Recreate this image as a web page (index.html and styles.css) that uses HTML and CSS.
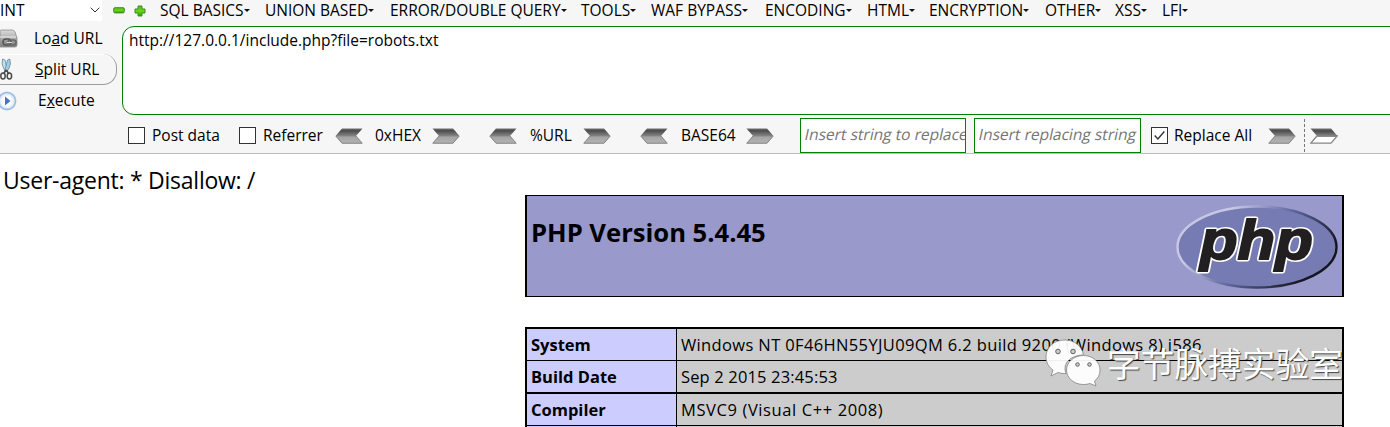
FILE: index.html
```html
<!DOCTYPE html>
<html lang="en">
<head>
<meta charset="utf-8">
<title>phpinfo()</title>
<link rel="stylesheet" href="styles.css">
</head>
<body>
<svg class="defs" width="0" height="0" aria-hidden="true">
  <defs>
    <linearGradient id="steel" x1="0" y1="0" x2="0" y2="1">
      <stop offset="0" stop-color="#707070"/><stop offset=".15" stop-color="#4c4c4c"/><stop offset=".5" stop-color="#858585"/><stop offset=".56" stop-color="#a4a4a4"/><stop offset="1" stop-color="#b4b4b4"/>
    </linearGradient>
    <linearGradient id="steelTop" x1="0" y1="0" x2="0" y2="1">
      <stop offset="0" stop-color="#707070"/><stop offset=".3" stop-color="#4c4c4c"/><stop offset="1" stop-color="#929292"/>
    </linearGradient>
    <linearGradient id="green" x1="0" y1="0" x2="0" y2="1">
      <stop offset="0" stop-color="#58b81c"/><stop offset=".5" stop-color="#62dc0c"/><stop offset="1" stop-color="#3b9a08"/>
    </linearGradient>
    <linearGradient id="disk" x1="0" y1="0" x2="0" y2="1">
      <stop offset="0" stop-color="#dcdcdc"/><stop offset="1" stop-color="#7c7c7c"/>
    </linearGradient>
    <radialGradient id="play">
      <stop offset=".45" stop-color="#fff"/><stop offset=".72" stop-color="#e1ecf8"/><stop offset=".88" stop-color="#93b6e2"/><stop offset="1" stop-color="#c4d6ec"/>
    </radialGradient>
    <linearGradient id="rim" x1="0" y1="0" x2="1" y2=".45">
      <stop offset="0" stop-color="#c6c8e4"/><stop offset=".3" stop-color="#c6c8e4"/><stop offset=".62" stop-color="#6068a0"/><stop offset="1" stop-color="#15151f"/>
    </linearGradient>
    <symbol id="next" viewBox="0 0 28 16">
      <path d="M.5 .5H21L27.5 8L21 15.5H.5L7 8Z" fill="url(#steel)"/>
      <path d="M.8 15.2L7 8M27.2 8L21 15.2H.8" fill="none" stroke="#858585"/>
    </symbol>
    <symbol id="next-open" viewBox="0 0 28 16">
      <path d="M.8 15.2L7 8H27.2L21 15.2Z" fill="#fff" stroke="#858585" stroke-width="1.3"/>
      <path d="M.5 .5H21L27.5 8L26 9H8L7 8Z" fill="url(#steelTop)"/>
    </symbol>
  </defs>
</svg>

<header class="hackbar">
  <div class="menu-row">
    <div class="select"><span>INT</span><svg width="10" height="6" viewBox="0 0 10 6"><path d="M.7 .7L5 5L9.3 .7" fill="none" stroke="#333"/></svg></div>
    <svg class="minus" width="12" height="7" viewBox="0 0 12 7"><rect x=".7" y=".7" width="10.6" height="5.2" rx="1.3" fill="url(#green)" stroke="#44892a"/></svg>
    <svg class="plus" width="12" height="12" viewBox="0 0 12 12"><path d="M4 1H8V4H11V8H8V11H4V8H1V4H4Z" fill="url(#green)" stroke="#44892a" stroke-linejoin="round"/></svg>
    <nav class="menu">
      <a>SQL BASICS</a><a>UNION BASED</a><a>ERROR/DOUBLE QUERY</a><a>TOOLS</a><a>WAF BYPASS</a><a>ENCODING</a><a>HTML</a><a>ENCRYPTION</a><a>OTHER</a><a>XSS</a><a>LFI</a>
    </nav>
  </div>

  <div class="main-row">
    <div class="actions">
      <div class="action">
        <svg width="18" height="20" viewBox="0 0 18 20"><path d="M0 2Q0 1 2 1H12Q14 1 15 3L17 9V16Q17 18 15 18H0Z" fill="url(#disk)" stroke="#8a8a8a" stroke-width=".8"/><path d="M0 8H16" stroke="#eee"/><rect x="3" y="10" width="8" height="6" rx="3" fill="none" stroke="#555" stroke-width="1.6"/><rect x="8" y="11" width="8" height="5" rx="2.5" fill="none" stroke="#686868" stroke-width="1.6"/><path d="M7 13.5H12" stroke="#ddd"/></svg>
        <span>Lo<u>a</u>d URL</span>
      </div>
      <div class="action raised">
        <svg width="18" height="24" viewBox="0 0 18 24"><path d="M2.5 2Q1 7 4 12L6 15L7.3 13L5 3Z" fill="#c2e1ee" stroke="#65899a" stroke-width=".8"/><path d="M9.8 2Q11.5 7 8.7 12L6 15L5 13L7.500 3Z" fill="#a4cee0" stroke="#65899a" stroke-width=".8"/><path d="M6 13L3.5 17M6.3 13L9 17" stroke="#444" stroke-width="1.6"/><ellipse cx="3" cy="19" rx="2.200" ry="3" fill="none" stroke="#4a4a4a" stroke-width="1.5"/><ellipse cx="9.400" cy="19" rx="2.200" ry="3" fill="none" stroke="#4a4a4a" stroke-width="1.5"/></svg>
        <span><u>S</u>plit URL</span>
      </div>
      <div class="action">
        <svg width="18" height="20" viewBox="0 0 18 20"><circle cx="7" cy="10" r="9.600" fill="url(#play)"/><path d="M5 5.500L10.500 10L5 14.500Z" fill="#3c78c4"/></svg>
        <span class="execute">E<u>x</u>ecute</span>
      </div>
    </div>
    <div class="url-box">http://127.0.0.1/include.php?file=robots.txt</div>
  </div>

  <div class="options">
    <i class="check"></i><span class="post">Post data</span>
    <i class="check"></i><span class="referrer">Referrer</span>
    <svg class="arrow back"><use href="#next"/></svg><span class="hex">0xHEX</span><svg class="arrow"><use href="#next"/></svg>
    <svg class="arrow back"><use href="#next"/></svg><span class="pct">%URL</span><svg class="arrow"><use href="#next"/></svg>
    <svg class="arrow back"><use href="#next"/></svg><span class="base">BASE64</span><svg class="arrow"><use href="#next"/></svg>
    <div class="field first"><span>Insert string to replace</span></div>
    <div class="field"><span>Insert replacing string</span></div>
    <i class="check ticked"><svg width="15" height="15" viewBox="0 0 14 14"><path d="M2.500 7L5.500 10.300L11.500 3.200" fill="none" stroke="#333" stroke-width="1.3"/></svg></i><span class="all">Replace All</span>
    <svg class="arrow"><use href="#next"/></svg><i class="divider"></i><svg class="arrow"><use href="#next-open"/></svg>
  </div>
</header>

<main class="page">
  <div class="robots">User-agent: * Disallow: /</div>
  <section class="version">
    <h1>PHP Version 5.4.45</h1>
    <svg class="logo" width="164" height="86" viewBox="0 0 164 86">
      <ellipse cx="82" cy="43" rx="79.500" ry="40.500" fill="#777bb3" stroke="url(#rim)" stroke-width="2.400"/>
      <g transform="translate(25 54.500) scale(1.1 1)">
        <text class="logo-edge">php</text>
        <text class="logo-face">php</text>
      </g>
    </svg>
  </section>
  <section class="info">
    <b>System</b><span class="sys">Windows NT 0F46HN55YJU09QM 6.2 build 9200 (Windows 8) i586</span>
    <b>Build Date</b><span class="date">Sep 2 2015 23:45:53</span>
    <b class="thick">Compiler</b><span class="thick comp">MSVC9 (Visual C++ 2008)</span>
    <b></b><span></span>
  </section>
  <div class="watermark">
    <svg width="56" height="48" viewBox="0 0 56 48">
      <g fill="#fff" fill-opacity=".94" stroke="#777" stroke-width=".7">
        <path d="M20 1C9 1 1 8 1 18C1 24 4 28 8 31L6 37L13 33.500Q17 35 21 34.500C17 24 26 16 38.500 16C37 7 29 1 20 1Z"/>
        <path d="M38.500 16.500C29 16.500 21.500 23 21.500 31C21.500 39 29 45.500 38.500 45.500Q42 45.500 45 44.500L51 47L49.500 42Q55 38 55 31C55 23 48 16.500 38.500 16.500Z"/>
      </g>
      <g fill="#ccc" stroke="#555" stroke-width=".9"><circle cx="13" cy="12.500" r="2.300"/><circle cx="28" cy="12.500" r="2.300"/><circle cx="32.500" cy="25.500" r="1.800"/><circle cx="44.500" cy="25.500" r="1.800"/></g>
    </svg>
    <span>字节脉搏实验室</span>
  </div>
</main>
</body>
</html>
```
FILE: styles.css
```css
* { box-sizing: border-box; }
body {
  margin: 0;
  width: 1390px;
  height: 427px;
  overflow: hidden;
  background: #fff;
  color: #000;
  font: 15.5px/20px "Open Sans", "Noto Sans", sans-serif;
  white-space: nowrap;
}
svg { display: block; flex: none; }
.defs { position: absolute; }

.hackbar { height: 154px; background: #f6f6f6; border-bottom: 1px solid #bdbdbd; }
.menu-row { display: flex; align-items: center; height: 21px; }
.select {
  display: flex;
  align-items: center;
  justify-content: space-between;
  width: 102px;
  height: 21px;
  padding: 0 2px 2px 0;
  background: #fff;
}
.minus { margin-left: 11px; }
.plus { margin-left: 9px; }
.menu {
  display: grid;
  grid-template-columns: 105px 125px 191px 70px 114px 102px 62px 116px 70px 47px 40px;
  margin: 0 0 2px 14px;
}
.menu a::after {
  content: "";
  display: inline-block;
  margin-left: 0;
  vertical-align: 4px;
  border: 3px solid transparent;
  border-top-color: #111;
  border-bottom: 0;
}

.main-row { display: flex; height: 94px; padding-top: 5px; }
.actions { flex: none; width: 122px; padding-right: 5px; margin-top: -3px; }
.action { display: flex; align-items: center; height: 31px; }
.action span { margin: 0 0 2px 16px; }
.action.raised {
  border: solid #9b9b9b;
  border-width: 0 1px 1px 0;
  border-radius: 0 14px 14px 0;
  box-shadow: inset 0 1px #fff;
}
.action.raised span { margin: 0 0 0 17px; }
.action .execute { margin-left: 20px; }
.url-box {
  width: 1290px;
  height: 89px;
  flex: none;
  padding: 3px 6px;
  background: #fff;
  border: 1px solid #008000;
  border-radius: 12px 0 0 12px;
}

.options { display: flex; align-items: center; height: 38px; padding: 3px 0 0 128px; }
.options > span { padding-bottom: 2px; }
.check { width: 17px; height: 17px; border: 1px solid #333; background: #fff; }
.arrow { width: 28px; height: 16px; }
.back { transform: scaleX(-1); }
.post { width: 87px; padding-left: 7px; }
.post + .check { margin-left: 7px; }
.referrer { width: 79px; padding-left: 7px; }
.hex { width: 69px; padding-left: 12px; }
.pct { width: 66px; padding-left: 13px; }
.base { width: 78px; padding-left: 13px; }
.hex + .arrow, .pct + .arrow { margin-right: 29px; }
.field {
  width: 167px;
  height: 35px;
  padding-left: 4px;
  border: 1px solid #008000;
  background: #fff;
  color: #757575;
  line-height: 31px;
  overflow: hidden;
}
.field span { display: inline-block; transform: skewX(-12deg); }
.field.first { width: 166px; margin: 0 8px 0 26px; }
.ticked { margin-left: 10px; }
.all { width: 100px; padding-left: 6px; }
.divider { height: 33px; margin: 0 5px 0 8px; border-left: 1px dashed #777; }

.page { position: relative; }
.robots { height: 41px; padding: 7px 0 0 3px; font-size: 23px; line-height: 38px; letter-spacing: -0.25px; }
.version {
  display: flex;
  justify-content: space-between;
  width: 819px;
  height: 102px;
  margin-left: 525px;
  border: solid #000;
  border-width: 1px 2px;
  background: #9999cc;
}
.version h1 { margin: 19px 0 0 4px; font-size: 25.6px; line-height: 36px; }
.logo { margin: 8px 3px 0 0; overflow: visible; font: italic bold 56px "Liberation Sans", sans-serif; }
.logo-edge { fill: #fff; stroke: #fff; stroke-width: 5px; stroke-linejoin: round; }
.logo-face { fill: #221f20; stroke: #221f20; stroke-width: 1.8px; }
.info {
  display: grid;
  grid-template: 32px 32px 33px 10px / 149px 1fr;
  width: 819px;
  margin: 30px 0 0 525px;
  padding-top: 2px;
  background: #000;
  border: solid #000;
  border-width: 0 2px;
  font-size: 16.5px;
  line-height: 31px;
}
.info > * { margin-bottom: 1px; padding-left: 4px; }
.info b { background: #ccccff; }
.info span { background: #cccccc; border-left: 1px solid #000; }
.info .thick { margin-top: 1px; }
.sys { letter-spacing: 0.36px; }
.date { letter-spacing: 0.15px; }
.comp { letter-spacing: 0.6px; }
.watermark {
  position: absolute;
  left: 1045px;
  top: 185px;
  display: flex;
  align-items: center;
  color: #fff;
  font: 400 33.7px/48px "Noto Sans CJK SC", sans-serif;
  text-shadow: 1px 1px 1px #444;
}
.watermark span { margin-left: 6px; }
```
